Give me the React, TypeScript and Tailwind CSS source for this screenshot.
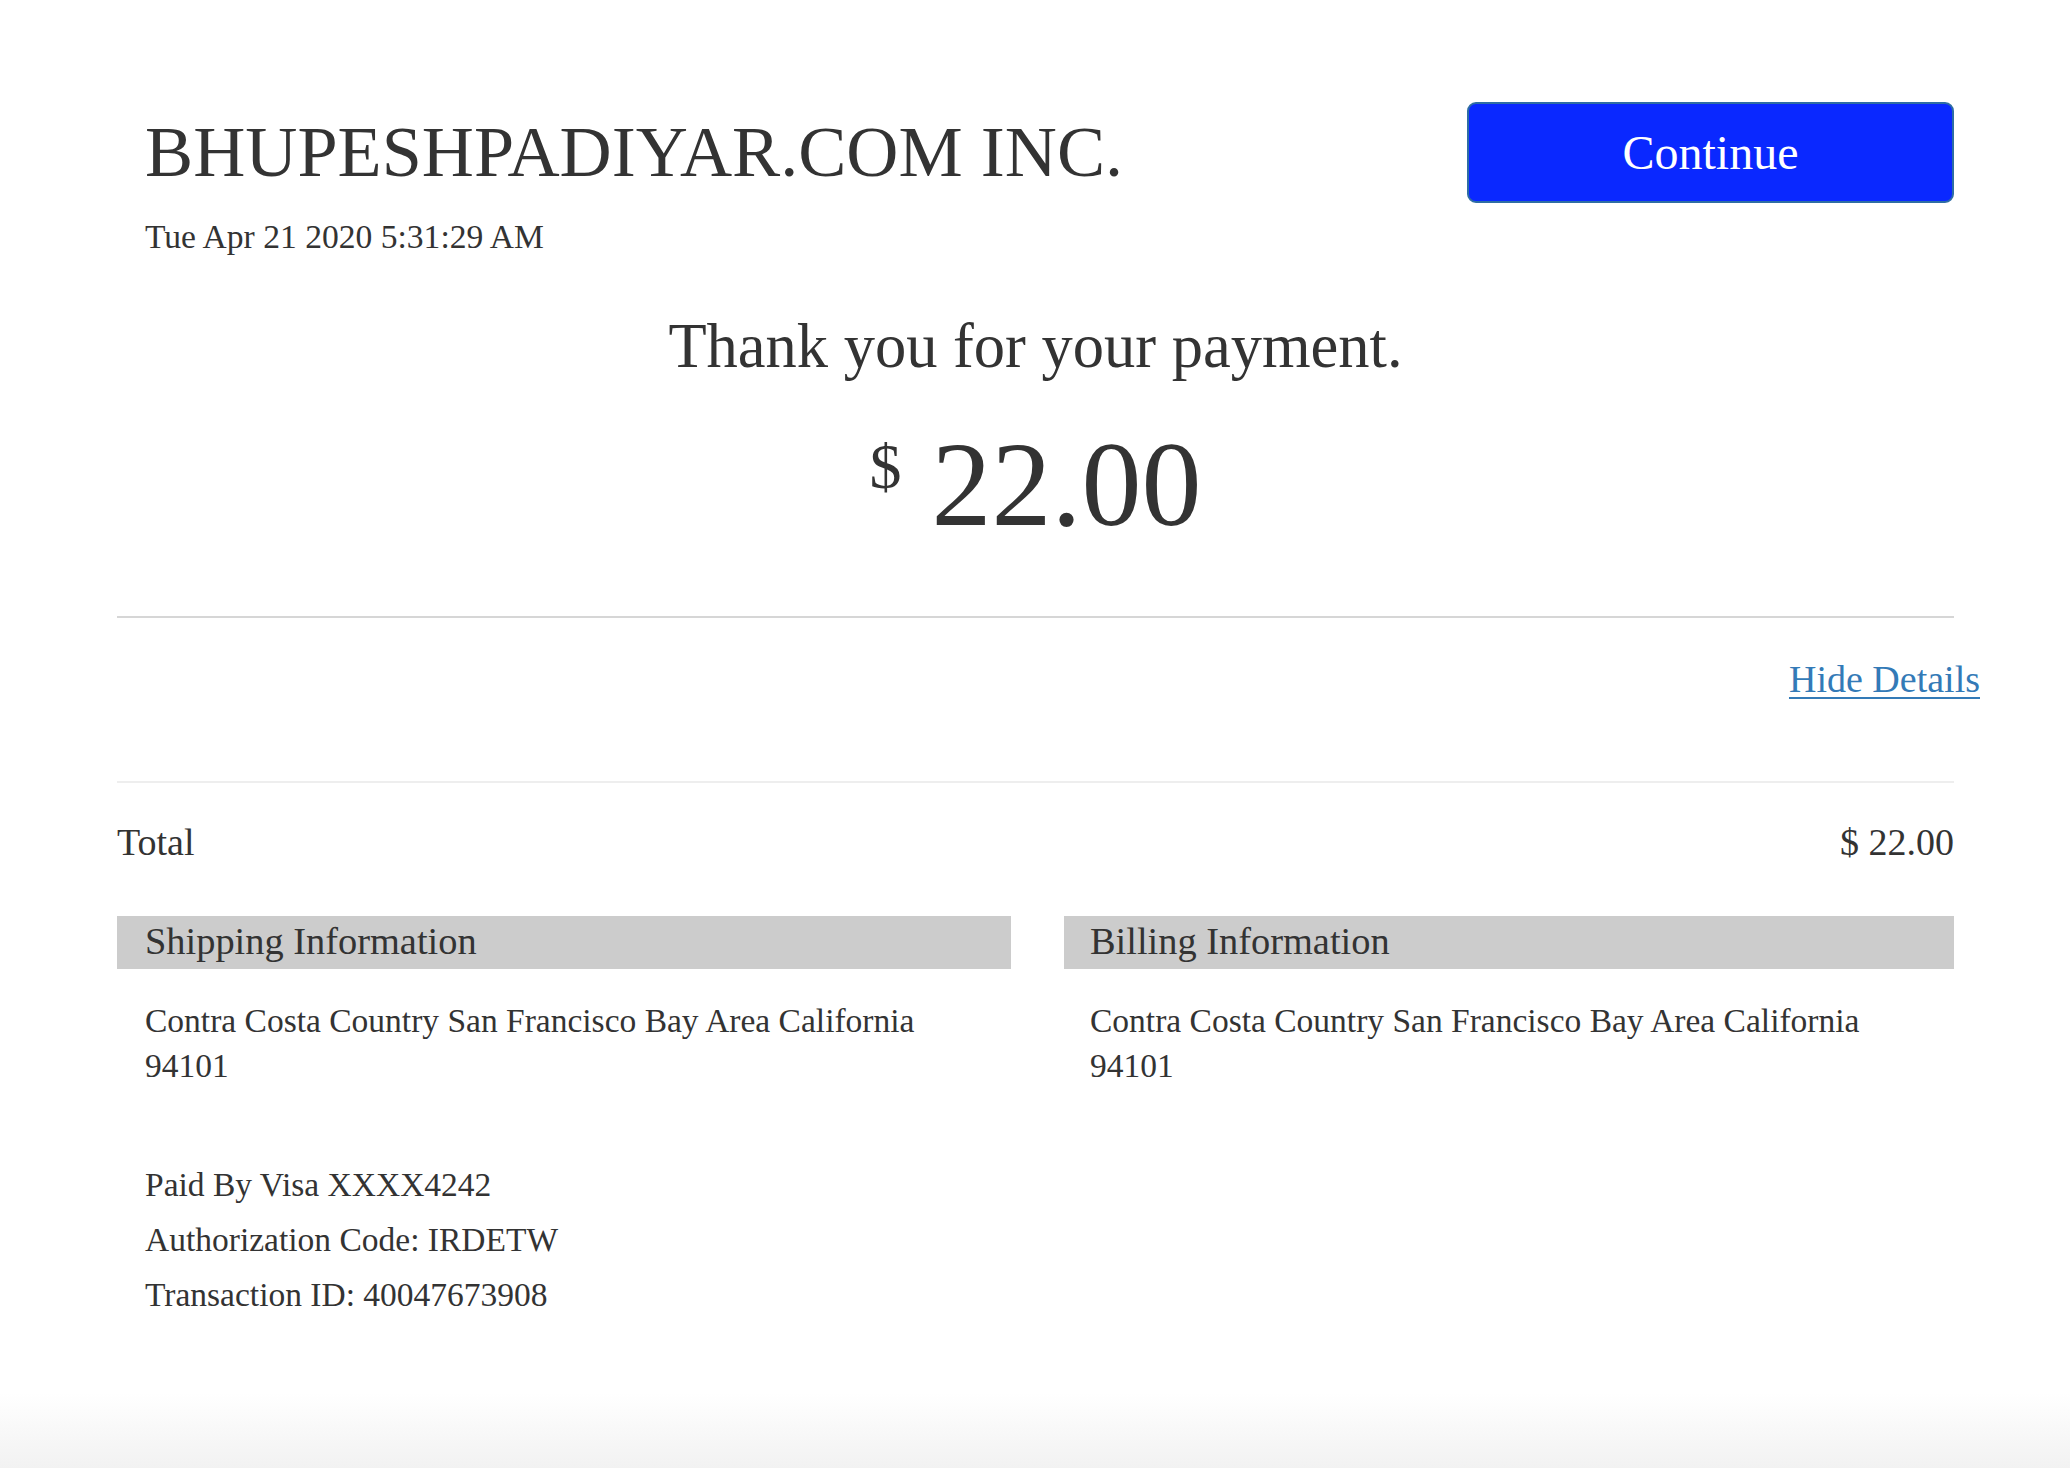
import React from "react";

export default function App() {
  const serif = { fontFamily: '"Liberation Serif", "Times New Roman", Times, serif' };
  return (
    <div
      className="min-h-[1468px] w-full bg-white text-[#333333] flex flex-col"
      style={serif}
    >
      <div className="pl-[117px] pr-[116px] pt-[102px]">
        {/* Header */}
        <div className="flex items-start justify-between">
          <div className="pl-[28px] pt-[10px]">
            <div className="text-[72.2px] leading-[80px]">BHUPESHPADIYAR.COM INC.</div>
            <div className="mt-[25px] text-[33.6px] leading-[40px]">Tue Apr 21 2020 5:31:29 AM</div>
          </div>
          <button
            type="button"
            className="w-[487px] h-[101px] rounded-[9px] border-2 border-[#2e6da4] bg-[#0a28ff] text-white text-[48px] leading-[97px] text-center"
            style={serif}
          >
            Continue
          </button>
        </div>

        {/* Thank you */}
        <div className="mt-[54px] text-center text-[62.5px] leading-[70px]">
          Thank you for your payment.
        </div>

        {/* Amount */}
        <div className="mt-[39px] flex justify-center items-start h-[130px]">
          <span className="mt-[15px] mr-[30px] text-[64px] leading-[64px]">$</span>
          <span className="text-[120px] leading-[130px]">22.00</span>
        </div>

        <div className="mt-[66px] h-[2px] bg-[#d6d6d6]" />

        {/* Hide details */}
        <div className="mt-[39px] flex justify-end -mr-[26px]">
          <a
            href="#"
            className="text-[38px] leading-[44px] text-[#337ab7] underline decoration-2 underline-offset-[5px]"
          >
            Hide Details
          </a>
        </div>

        <div className="mt-[80px] h-[2px] bg-[#eeeeee]" />

        {/* Total */}
        <div className="mt-[37px] flex justify-between text-[38px] leading-[44px]">
          <span>Total</span>
          <span>$ 22.00</span>
        </div>

        {/* Info */}
        <div className="mt-[52px] grid grid-cols-[894px_1fr] gap-x-[53px]">
          <div>
            <div className="bg-[#cccccc] pl-[28px] pb-[4px] pt-[1px] text-[38.4px] leading-[48px]">
              Shipping Information
            </div>
            <div className="mt-[29px] pl-[28px] text-[33.5px] leading-[45px]">
              Contra Costa Country San Francisco Bay Area California
              <br />
              94101
            </div>
            <div className="mt-[74px] pl-[28px] flex flex-col gap-[10px] text-[33.5px] leading-[45px]">
              <div>Paid By Visa XXXX4242</div>
              <div>Authorization Code: IRDETW</div>
              <div>Transaction ID: 40047673908</div>
            </div>
          </div>
          <div>
            <div className="bg-[#cccccc] pl-[26px] pb-[4px] pt-[1px] text-[38.4px] leading-[48px]">
              Billing Information
            </div>
            <div className="mt-[29px] pl-[26px] text-[33.5px] leading-[45px]">
              Contra Costa Country San Francisco Bay Area California
              <br />
              94101
            </div>
          </div>
        </div>
      </div>

      <div className="flex-1" />
      <div className="h-[75px] bg-gradient-to-b from-white to-[#f2f2f2]" />
    </div>
  );
}
